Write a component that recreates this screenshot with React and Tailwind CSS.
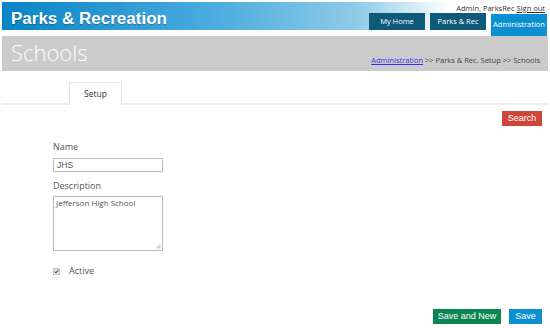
import React from 'react';

const NavTab = ({ label, active = false }) => (
  <div
    className={`flex items-center justify-center w-[56px] text-[7.5px] text-white ${
      active ? 'h-[22px] bg-[#0b8fd0] mt-[1px]' : 'h-[17px] bg-[#0e5a79]'
    }`}
  >
    {label}
  </div>
);

export default function App() {
  return (
    <div className="w-[550px] h-[328px] bg-white overflow-hidden font-['Open_Sans',sans-serif] text-[#444]">
      {/* Encabezado */}
      <div className="mx-[2px] mt-[2px] h-[33px] flex justify-between bg-[linear-gradient(90deg,#0884c5_0%,#4eade0_40%,#8fcbe7_65%,#ffffff_82%)] bg-no-repeat bg-[length:100%_28px]">
        <div className="pl-[9px] pt-[4px] text-[17px] font-bold text-white font-['Liberation_Sans',Arial,sans-serif] [text-shadow:0_1px_1px_rgba(0,0,0,0.25)]">
          Parks &amp; Recreation
        </div>
        <div className="flex flex-col items-end pr-[1px]">
          <div className="h-[11px] pt-[2px] pr-[2px] text-[7.5px] leading-[9px] text-[#333]">
            Admin, ParksRec <span className="underline">Sign out</span>
          </div>
          <div className="flex items-start gap-[5px]">
            <NavTab label="My Home" />
            <NavTab label="Parks & Rec" />
            <NavTab label="Administration" active />
          </div>
        </div>
      </div>

      {/* Banner */}
      <div className="mx-[2px] mt-[1px] h-[35px] bg-[#cbcbcb] flex items-end justify-between px-[8px] pb-[5px]">
        <div className="pl-[1px] text-[22px] leading-[28px] font-light text-white">Schools</div>
        <div className="text-[7.5px] leading-[10px] text-[#444] pb-[1px]">
          <span className="underline text-[#3333ee]">Administration</span> &gt;&gt; Parks &amp; Rec. Setup &gt;&gt; Schools
        </div>
      </div>

      {/* Pestañas */}
      <div className="mx-[2px] mt-[11px] h-[23px] border-b-2 border-[#eeeeee] flex">
        <div className="ml-[67px] w-[53px] h-[23px] bg-white border border-b-0 border-[#e6e6e6] flex items-center justify-center text-[8.5px] text-[#333]">
          Setup
        </div>
      </div>

      <div className="flex justify-end pr-[8px] mt-[6px]">
        <button className="w-[40px] h-[15px] bg-[#cf4538] text-white text-[9px] leading-[15px] font-['Liberation_Sans',Arial,sans-serif]">
          Search
        </button>
      </div>

      {/* Formulario */}
      <div className="pl-[53px] mt-[15px] flex flex-col">
        <label className="text-[9px] leading-[12px] text-[#555]">Name</label>
        <div className="mt-[5px] w-[110px] h-[14px] border border-[#bbbbbb] px-[3px] text-[8.5px] leading-[12px] text-[#555] font-['Liberation_Sans',Arial,sans-serif]">
          JHS
        </div>
        <label className="mt-[8px] text-[9px] leading-[12px] text-[#555]">Description</label>
        <div className="relative mt-[4px] w-[110px] h-[55px] border border-[#bbbbbb] px-[2px] text-[8px] leading-[11px] text-[#555]">
          Jefferson High School
          <svg className="absolute right-[1px] bottom-[1px]" width="5" height="5" viewBox="0 0 5 5">
            <path d="M4.5 0.5 L0.5 4.5 M4.5 2.5 L2.5 4.5" stroke="#999" strokeWidth="0.8" />
          </svg>
        </div>
        <div className="mt-[14px] flex items-center">
          <div className="w-[7px] h-[7px] bg-[#dcdcdc] border border-[#c8c8c8] flex items-center justify-center">
            <svg width="5" height="5" viewBox="0 0 5 5">
              <path d="M0.6 2.6 L1.9 3.9 L4.4 0.9" stroke="#333" strokeWidth="1" fill="none" />
            </svg>
          </div>
          <span className="ml-[9px] text-[9px] leading-[12px] text-[#555]">Active</span>
        </div>
      </div>

      {/* Acciones */}
      <div className="flex justify-end gap-[8px] pr-[8px] mt-[32px]">
        <button className="w-[68px] h-[15px] bg-[#0b8551] text-white text-[9px] leading-[15px] font-['Liberation_Sans',Arial,sans-serif]">
          Save and New
        </button>
        <button className="w-[33px] h-[15px] bg-[#0b8fd0] text-white text-[9px] leading-[15px] font-['Liberation_Sans',Arial,sans-serif]">
          Save
        </button>
      </div>
    </div>
  );
}
